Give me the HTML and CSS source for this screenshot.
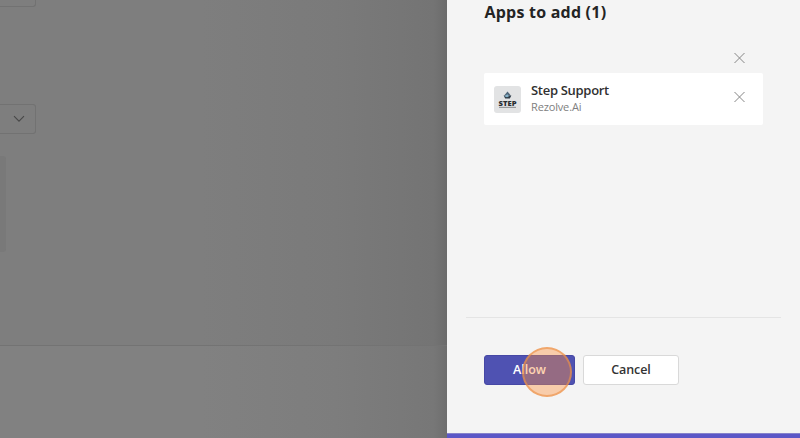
FILE: index.html
```html
<!DOCTYPE html>
<html lang="en">
<head>
<meta charset="utf-8">
<title>Apps to add</title>
<link rel="stylesheet" href="styles.css">
</head>
<body>
<div class="window">
  <main class="backdrop">
    <div class="form">
      <div class="field field-top"></div>
      <div class="field select">
        <svg width="12" height="8" viewBox="0 0 12 8"><path d="M1 1.2 6 6.2 11 1.2" fill="none" stroke="#484848" stroke-width="1.1"/></svg>
      </div>
      <div class="block"></div>
    </div>
    <div class="footer"></div>
  </main>
  <aside class="panel">
    <h1>Apps to add (1)</h1>
    <button class="close clear" aria-label="Clear"><svg width="13" height="12" viewBox="0 0 13 12"><path d="M1.5 1 11.5 11M11.5 1 1.5 11"/></svg></button>
    <div class="card">
      <svg class="logo" width="27" height="27" viewBox="0 0 27 27">
        <rect width="27" height="27" rx="3" fill="#e2e3e4"/>
        <path d="M13.5 5.5 10.2 9.5H16.8Z" fill="#50677a"/>
        <path d="M9.6 9.5H17.4L15.8 12.5H11.2Z" fill="#303d48"/>
        <path d="M10.3 10.3 13.4 8.3 15 10.2 13 11.3Z" fill="#86b4cc"/>
        <text x="4.5" y="19.5" textLength="18" lengthAdjust="spacingAndGlyphs">STEP</text>
        <path d="M5 21.4H22" stroke="#96999c" stroke-width="1.2"/>
      </svg>
      <div class="info">
        <div class="name">Step Support</div>
        <div class="vendor">Rezolve.Ai</div>
      </div>
      <button class="close" aria-label="Remove"><svg width="13" height="12" viewBox="0 0 13 12"><path d="M1.5 1 11.5 11M11.5 1 1.5 11"/></svg></button>
    </div>
    <div class="actions">
      <button class="btn allow"><span>Allow</span><i class="pointer"></i></button>
      <button class="btn cancel"><span>Cancel</span></button>
    </div>
    <div class="accent"></div>
  </aside>
</div>
</body>
</html>
```
FILE: styles.css
```css
* { box-sizing: border-box; }
body {
  margin: 0;
  font-family: "Open Sans", "Noto Sans", sans-serif;
  color: #242424;
}
button { font: inherit; padding: 0; margin: 0; }
svg { display: block; }
.window {
  display: grid;
  grid-template-columns: 447px 353px;
  height: 438px;
  overflow: hidden;
}
.backdrop {
  display: flex;
  flex-direction: column;
  background: linear-gradient(90deg, #7e7e7e 0, #7e7e7e 45%, #7a7a7a 75%, #747474 97%, #6b6b6b 100%);
}
.form { height: 345px; }
.field {
  width: 36px;
  border: 1px solid #727272;
  border-left: 0;
  border-radius: 0 3px 3px 0;
}
.field-top { height: 7px; border-top: 0; border-top-right-radius: 0; }
.select {
  height: 30px;
  margin-top: 97px;
  display: flex;
  align-items: center;
  justify-content: flex-end;
  padding-right: 10px;
}
.block {
  width: 6px;
  height: 96px;
  margin-top: 22px;
  background: #797979;
  border-radius: 0 3px 3px 0;
}
.footer {
  flex: 1;
  border-top: 1px solid #737373;
  background: rgba(255, 255, 255, .025);
}
.panel {
  display: flex;
  flex-direction: column;
  background: #f4f4f4;
}
h1 {
  margin: 0 0 0 37.5px;
  height: 24px;
  line-height: 24px;
  font-size: 16px;
  font-weight: 700;
  letter-spacing: .22px;
  white-space: nowrap;
}
.close {
  border: 0;
  background: none;
  width: 13px;
  height: 12px;
}
.close path { fill: none; stroke: #868686; stroke-width: 1; }
.clear { margin: 28px 0 0 286px; }
.card {
  display: flex;
  width: 279px;
  height: 52px;
  margin: 9px 0 0 37px;
  padding: 0 17px 0 10px;
  background: #fff;
  border-radius: 2px;
}
.logo { margin-top: 13px; }
.logo text { font: 800 6.5px "Open Sans", sans-serif; fill: #292d31; }
.info { flex: 1; margin: 8px 0 0 10px; white-space: nowrap; }
.name { font-size: 13px; line-height: 19px; font-weight: 600; letter-spacing: -.3px; color: #303030; }
.vendor { font-size: 11px; line-height: 14px; letter-spacing: -.15px; color: #808080; }
.card .close { margin-top: 18px; }
.actions {
  display: flex;
  gap: 8px;
  width: 315px;
  margin: 192px 0 0 19px;
  padding: 37px 0 0 18px;
  border-top: 1px solid #e4e4e4;
}
.btn {
  height: 30px;
  border-radius: 3px;
  font-size: 12.5px;
  font-weight: 600;
  line-height: 28px;
}
.allow {
  position: relative;
  width: 91px;
  border: 1px solid #4648a5;
  background: #4f52b2;
  color: #fff;
}
.cancel {
  width: 96px;
  border: 1px solid #d9d9d9;
  background: #fff;
  color: #333;
  letter-spacing: -.1px;
}
.pointer {
  position: absolute;
  left: 37px;
  top: -9px;
  width: 50px;
  height: 50px;
  border: 2px solid rgba(235, 145, 72, .65);
  border-radius: 50%;
  background: rgba(255, 145, 60, .4);
}
.accent { height: 5px; margin-top: auto; background: #5b57c7; border-top: 1px solid #8583cb; }
```
